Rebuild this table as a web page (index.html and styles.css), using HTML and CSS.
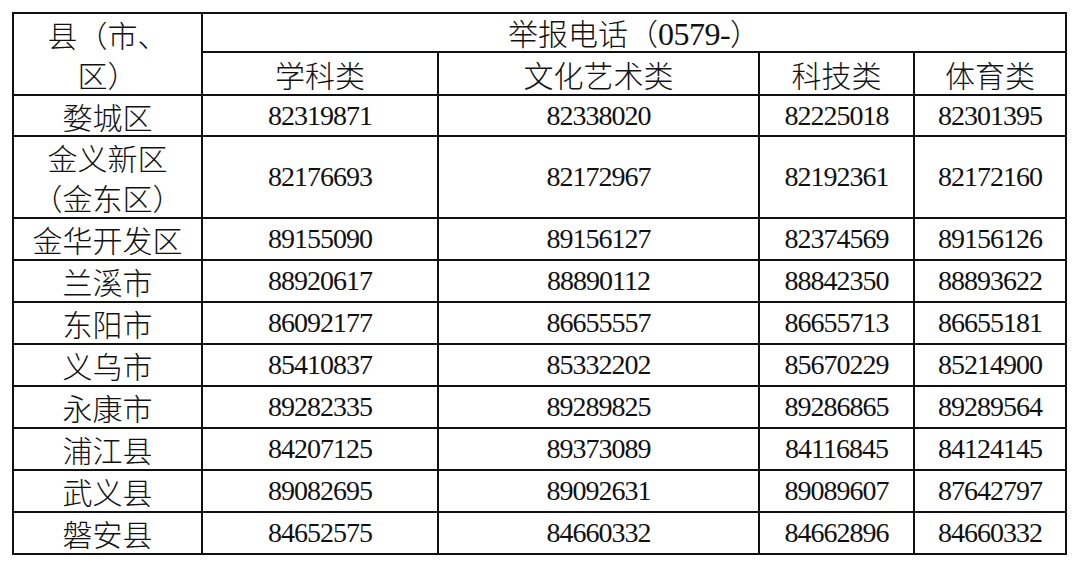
FILE: index.html
```html
<!DOCTYPE html>
<html lang="zh-CN">
<head>
<meta charset="utf-8">
<link rel="stylesheet" href="styles.css">
</head>
<body>
<table class="tbl">
  <colgroup>
    <col class="c1"><col class="c2"><col class="c3"><col class="c4"><col class="c5">
  </colgroup>
  <tr class="r-h1">
    <td class="cn head-county" rowspan="2">县（市、<br>区）</td>
    <td class="cn" colspan="4">举报电话（<span class="hnum">0579-</span>）</td>
  </tr>
  <tr class="r-h2">
    <td class="cn">学科类</td>
    <td class="cn">文化艺术类</td>
    <td class="cn">科技类</td>
    <td class="cn">体育类</td>
  </tr>
  <tr class="r-a">
    <td class="cn">婺城区</td>
    <td class="num">82319871</td><td class="num">82338020</td><td class="num">82225018</td><td class="num">82301395</td>
  </tr>
  <tr class="r-b">
    <td class="cn two">金义新区<br>（金东区）</td>
    <td class="num">82176693</td><td class="num">82172967</td><td class="num">82192361</td><td class="num">82172160</td>
  </tr>
  <tr class="r">
    <td class="cn">金华开发区</td>
    <td class="num">89155090</td><td class="num">89156127</td><td class="num">82374569</td><td class="num">89156126</td>
  </tr>
  <tr class="r">
    <td class="cn">兰溪市</td>
    <td class="num">88920617</td><td class="num">88890112</td><td class="num">88842350</td><td class="num">88893622</td>
  </tr>
  <tr class="r">
    <td class="cn">东阳市</td>
    <td class="num">86092177</td><td class="num">86655557</td><td class="num">86655713</td><td class="num">86655181</td>
  </tr>
  <tr class="r">
    <td class="cn">义乌市</td>
    <td class="num">85410837</td><td class="num">85332202</td><td class="num">85670229</td><td class="num">85214900</td>
  </tr>
  <tr class="r">
    <td class="cn">永康市</td>
    <td class="num">89282335</td><td class="num">89289825</td><td class="num">89286865</td><td class="num">89289564</td>
  </tr>
  <tr class="r">
    <td class="cn">浦江县</td>
    <td class="num">84207125</td><td class="num">89373089</td><td class="num">84116845</td><td class="num">84124145</td>
  </tr>
  <tr class="r">
    <td class="cn">武义县</td>
    <td class="num">89082695</td><td class="num">89092631</td><td class="num">89089607</td><td class="num">87642797</td>
  </tr>
  <tr class="r">
    <td class="cn">磐安县</td>
    <td class="num">84652575</td><td class="num">84660332</td><td class="num">84662896</td><td class="num">84660332</td>
  </tr>
</table>
</body>
</html>
```

FILE: styles.css
```css
html, body {
  margin: 0;
  padding: 0;
  background: #ffffff;
}

.tbl {
  margin: 12px 0 0 12px;
  border-collapse: collapse;
  table-layout: fixed;
  width: 1055px;
  color: #111;
}

.c1 { width: 189px; }
.c2 { width: 236px; }
.c3 { width: 321px; }
.c4 { width: 155px; }
.c5 { width: 152px; }

.tbl td {
  border: 2px solid #111;
  padding: 0;
  text-align: center;
  vertical-align: middle;
  white-space: nowrap;
}

.cn {
  font-family: "Noto Sans CJK SC", "Liberation Serif", sans-serif;
  font-weight: 300;
  font-size: 30px;
  line-height: 32px;
}

.hnum {
  font-family: "Liberation Serif", serif;
  font-size: 32px;
  letter-spacing: -0.5px;
}

.num {
  font-family: "Liberation Serif", serif;
  font-size: 28px;
  letter-spacing: -1px;
  line-height: 30px;
}

.head-county {
  line-height: 40px;
}

.two {
  line-height: 40px;
}

.r-h1 { height: 39px; }
.r-h2 { height: 43px; }
.r-a { height: 41px; }
.r-b { height: 82px; }
.r { height: 42px; }
```
